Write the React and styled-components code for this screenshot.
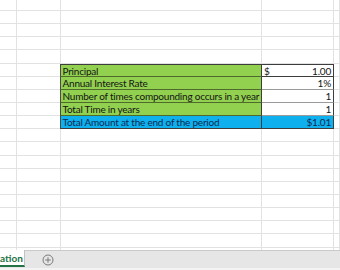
import React from 'react';
import styled, { createGlobalStyle } from 'styled-components';

const GlobalStyle = createGlobalStyle`
  html, body {
    margin: 0;
    padding: 0;
    background: #ffffff;
  }
  body {
    font-family: Lato, "Liberation Sans", sans-serif;
  }
`;

const COLUMNS = '17px 44px 201px 72px 1fr';
const ROW_HEIGHT = 13.15;
const ROW_COUNT = 20;

const Page = styled.div`
  width: 340px;
  height: 270px;
  display: flex;
  flex-direction: column;
  overflow: hidden;
  background: #ffffff;
`;

const Sheet = styled.div`
  height: 250px;
  display: flex;
  flex-direction: column;
  overflow: hidden;
`;

const Row = styled.div`
  flex: none;
  display: grid;
  grid-template-columns: ${COLUMNS};
  height: ${p => p.$height}px;
`;

const Cell = styled.div`
  box-sizing: border-box;
  border-right: 1px solid #e2e2e2;
  border-bottom: 1px solid #e2e2e2;
  font-size: 10px;
  letter-spacing: -0.22px;
  line-height: 12.5px;
  color: #1a1a1a;
  white-space: nowrap;
  overflow: hidden;
`;

const LabelCell = styled(Cell)`
  background: ${p => (p.$total ? '#0fb0ee' : '#92d050')};
  color: ${p => (p.$total ? '#0c2b52' : '#151515')};
  border-left: 1px solid #4a4a4a;
  border-right: 1px solid #3d3d3d;
  border-bottom: 1px solid ${p => (p.$last ? '#3d3d3d' : '#4f6b2c')};
  border-top: ${p => (p.$first ? '1px solid #3d3d3d' : 'none')};
  padding-left: 1.5px;
  margin-left: -1px;
`;

const ValueCell = styled(Cell)`
  display: flex;
  justify-content: ${p => (p.$currency ? 'space-between' : 'flex-end')};
  background: ${p => (p.$total ? '#0fb0ee' : '#ffffff')};
  color: ${p => (p.$total ? '#0c2b52' : '#151515')};
  border-right: 1px solid #3d3d3d;
  border-bottom: 1px solid ${p => (p.$last || p.$first ? '#3d3d3d' : '#9a9a9a')};
  border-top: ${p => (p.$first ? '1px solid #3d3d3d' : 'none')};
  padding: 0 2px 0 2px;
`;

const TabBar = styled.div`
  box-sizing: border-box;
  height: 18px;
  display: flex;
  align-items: stretch;
  background: #e6e6e6;
  border-top: 1px solid #c9c9c9;
`;

const ActiveTab = styled.div`
  box-sizing: border-box;
  width: 25px;
  display: flex;
  align-items: center;
  background: #ffffff;
  border-right: 1px solid #c2c2c2;
  border-bottom: 2px solid #217346;
  margin-top: -1px;
  margin-bottom: 1px;
  font-size: 10px;
  font-weight: 700;
  color: #217346;
  white-space: nowrap;
`;

const AddSheet = styled.button`
  margin-left: 17px;
  align-self: center;
  width: 12px;
  height: 12px;
  padding: 0;
  border: none;
  background: none;
  display: flex;
  align-items: center;
  justify-content: center;
`;

const Footer = styled.div`
  height: 2px;
  background: #f3f3f3;
`;

const TABLE_ROWS = [
  { label: 'Principal', currency: '$', value: '1.00' },
  { label: 'Annual Interest Rate', value: '1%' },
  { label: 'Number of times compounding occurs in a year', value: '1' },
  { label: 'Total Time in years', value: '1' },
  { label: 'Total Amount at the end of the period', value: '$1.01', total: true },
];

const TABLE_START = 5;

const PlusCircle = () => (
  <svg width="12" height="12" viewBox="0 0 12 12">
    <circle cx="6" cy="6" r="5" fill="none" stroke="#7a7a7a" strokeWidth="1" />
    <path d="M6 3.2v5.6M3.2 6h5.6" stroke="#7a7a7a" strokeWidth="1" />
  </svg>
);

const App = () => {
  const rows = [];
  for (let i = 0; i < ROW_COUNT; i++) {
    const height = i === 0 ? 11 : ROW_HEIGHT;
    const item = TABLE_ROWS[i - TABLE_START];
    const first = i === TABLE_START;
    const last = i === TABLE_START + TABLE_ROWS.length - 1;
    rows.push(
      <Row key={i} $height={height}>
        <Cell />
        <Cell />
        {item ? (
          <>
            <LabelCell $total={item.total} $first={first} $last={last}>
              {item.label}
            </LabelCell>
            <ValueCell
              $total={item.total}
              $first={first}
              $last={last}
              $currency={!!item.currency}
            >
              {item.currency && <span>{item.currency}</span>}
              <span>{item.value}</span>
            </ValueCell>
          </>
        ) : (
          <>
            <Cell />
            <Cell />
          </>
        )}
        <Cell />
      </Row>
    );
  }

  return (
    <Page>
      <GlobalStyle />
      <Sheet>{rows}</Sheet>
      <TabBar>
        <ActiveTab>ation</ActiveTab>
        <AddSheet aria-label="New sheet">
          <PlusCircle />
        </AddSheet>
      </TabBar>
      <Footer />
    </Page>
  );
};

export default App;
